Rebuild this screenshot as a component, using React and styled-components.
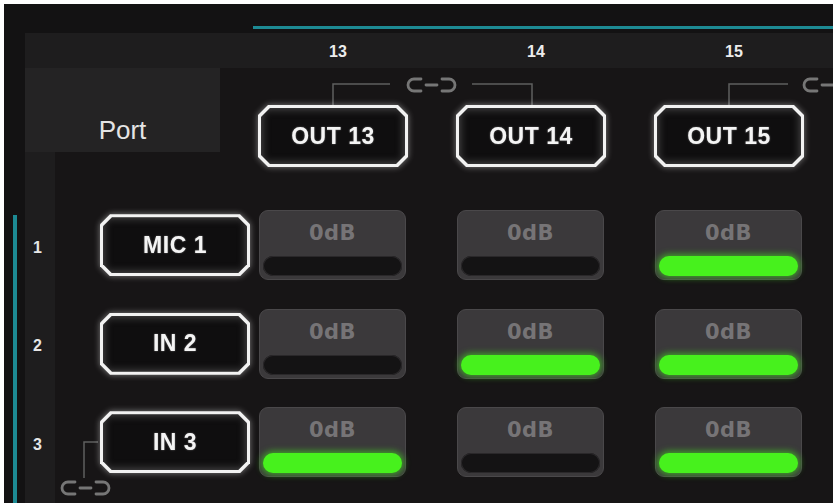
import styled, { createGlobalStyle } from "styled-components";

const FONT = `"Liberation Sans", Arial, sans-serif`;
const TEAL = "#1d8a94";
const COLUMNS = "30px 198px repeat(3, 198px)";

const GlobalStyle = createGlobalStyle`
  *, *::before, *::after {
    box-sizing: border-box;
  }
  html, body {
    margin: 0;
    background: #ffffff;
  }
  body {
    height: 100vh;
    padding: 4px 4px 0;
    overflow: hidden;
    font-family: ${FONT};
  }
  #root {
    height: 100%;
  }
`;

const Frame = styled.div`
  display: flex;
  height: 100%;
  background: #131213;
  overflow: hidden;
`;

const LeftRail = styled.div`
  flex-shrink: 0;
  width: 21px;
  padding: 211px 0 0 9px;
`;

const RailMark = styled.div`
  width: 4px;
  height: 100%;
  background: ${TEAL};
`;

const Main = styled.div`
  flex: 1;
  min-width: 0;
  display: flex;
  flex-direction: column;
`;

const TopStrip = styled.div`
  height: 3px;
  margin: 22px 0 4px 228px;
  background: ${TEAL};
`;

const HeaderBar = styled.div`
  display: grid;
  grid-template-columns: ${COLUMNS};
  align-items: center;
  height: 35px;
  background: #1e1d1e;
`;

const ColNumber = styled.div`
  grid-column: ${(p) => p.$col};
  width: 150px;
  margin-left: 5px;
  padding: 2px 0 0 10px;
  text-align: center;
  color: #ececec;
  font-size: 16px;
  font-weight: 700;
`;

const Matrix = styled.div`
  flex: 1;
  display: grid;
  grid-template-columns: ${COLUMNS};
  grid-template-rows: 128px repeat(3, 98.5px) 1fr;
  background: #171516;
`;

const NumberRail = styled.div`
  grid-column: 1;
  grid-row: 1 / -1;
  background: #1e1d1e;
`;

const PortCell = styled.div`
  grid-column: 1 / 3;
  grid-row: 1;
  align-self: start;
  width: 195px;
  height: 84px;
  padding-top: 48px;
  background: #242324;
  color: #e4e4e4;
  font-size: 26px;
  line-height: 28px;
  text-align: center;
`;

const LinkLayer = styled.svg`
  grid-column: 3 / -1;
  grid-row: 1;
  align-self: start;
  overflow: visible;
`;

const InLink = styled.svg`
  grid-column: 2;
  grid-row: 4;
  align-self: start;
  overflow: visible;
`;

const OutSlot = styled.div`
  grid-column: ${(p) => p.$col};
  grid-row: 1;
  padding: 37px 0 0 5px;
`;

const RowNumber = styled.div`
  grid-column: 1;
  grid-row: ${(p) => p.$row};
  display: flex;
  align-items: center;
  justify-content: center;
  padding: 5px 5px 0 0;
  color: #e6e6e6;
  font-size: 16px;
  font-weight: 700;
`;

const RowLabel = styled.div`
  grid-column: 2;
  grid-row: ${(p) => p.$row};
  display: flex;
  align-items: center;
  padding-left: 45px;
`;

const CellSlot = styled.div`
  grid-column: ${(p) => p.$col};
  grid-row: ${(p) => p.$row};
  display: flex;
  align-items: center;
  padding-left: 6px;
`;

/* octagonal port button: white rim layer + dark face layer */
const Octagon = styled.div`
  width: 150px;
  height: 62px;
  filter: drop-shadow(0 0 3px rgba(255, 255, 255, 0.45));
`;

const OctRim = styled.div`
  height: 100%;
  padding: 3px;
  background: #f2f2f2;
  clip-path: polygon(10px 0, calc(100% - 10px) 0, 100% 10px, 100% calc(100% - 10px), calc(100% - 10px) 100%, 10px 100%, 0 calc(100% - 10px), 0 10px);
`;

const OctFace = styled.div`
  height: 100%;
  display: flex;
  align-items: center;
  justify-content: center;
  background: #0f0e0f;
  box-shadow: inset 0 0 9px 1px rgba(200, 200, 200, 0.35);
  clip-path: polygon(9px 0, calc(100% - 9px) 0, 100% 9px, 100% calc(100% - 9px), calc(100% - 9px) 100%, 9px 100%, 0 calc(100% - 9px), 0 9px);
  color: #f4f4f4;
  font-size: 23px;
  font-weight: 700;
  letter-spacing: 0.5px;
  text-shadow: 0 0 2px rgba(255, 255, 255, 0.4);
`;

const Cell = styled.div`
  width: 147px;
  height: 70px;
  display: flex;
  flex-direction: column;
  align-items: center;
  padding: 10px 3px 3px;
  border: 1px solid #4a484a;
  border-radius: 9px;
  background: #3b393b;
`;

const Gain = styled.span`
  color: #767476;
  font-family: "DejaVu Sans", ${FONT};
  font-size: 21px;
  font-weight: 700;
  line-height: 24px;
  letter-spacing: 0.5px;
`;

const Meter = styled.div`
  align-self: stretch;
  margin-top: auto;
  height: 20px;
  border-radius: 10px;
  background: ${(p) => (p.$on ? "#47f11d" : "#141314")};
  box-shadow: ${(p) =>
    p.$on ? "0 0 6px 2px rgba(70, 240, 30, 0.55)" : "inset 0 0 0 1px #2a282a"};
`;

const PortButton = ({ children }) => (
  <Octagon>
    <OctRim>
      <OctFace>{children}</OctFace>
    </OctRim>
  </Octagon>
);

// "linked" symbol: two brackets joined by a dash
const Chain = ({ x, y }) => (
  <g
    transform={`translate(${x} ${y})`}
    fill="none"
    stroke="#767676"
    strokeWidth="2.8"
    strokeLinecap="round"
  >
    <path d="M15 3 H8 A6 6 0 0 0 8 15 H15" />
    <path d="M20 9 H31" />
    <path d="M36 3 H43 A6 6 0 0 1 43 15 H36" />
  </g>
);

const outputs = [13, 14, 15];

const inputs = [
  { n: 1, label: "MIC 1", on: [false, false, true] },
  { n: 2, label: "IN 2", on: [false, true, true] },
  { n: 3, label: "IN 3", on: [true, false, true] },
];

export default function App() {
  return (
    <>
      <GlobalStyle />
      <Frame>
        <LeftRail>
          <RailMark />
        </LeftRail>
        <Main>
          <TopStrip />
          <HeaderBar>
            {outputs.map((o, i) => (
              <ColNumber key={o} $col={i + 3}>
                {o}
              </ColNumber>
            ))}
          </HeaderBar>
          <Matrix>
            <NumberRail />
            <PortCell>Port</PortCell>

            <LinkLayer width="580" height="40">
              <g fill="none" stroke="#5f5f5f" strokeWidth="1.5">
                <path d="M80 39 V16 H137" />
                <path d="M219 16 H279 V39" />
                <path d="M476 39 V16 H535" />
              </g>
              <Chain x={153} y={8} />
              <Chain x={549} y={8} />
            </LinkLayer>

            {outputs.map((o, i) => (
              <OutSlot key={o} $col={i + 3}>
                <PortButton>OUT {o}</PortButton>
              </OutSlot>
            ))}

            {inputs.map((row, r) => [
              <RowNumber key={`n${row.n}`} $row={r + 2}>
                {row.n}
              </RowNumber>,
              <RowLabel key={`l${row.n}`} $row={r + 2}>
                <PortButton>{row.label}</PortButton>
              </RowLabel>,
              ...row.on.map((on, c) => (
                <CellSlot key={`c${row.n}-${c}`} $row={r + 2} $col={c + 3}>
                  <Cell>
                    <Gain>0dB</Gain>
                    <Meter $on={on} />
                  </Cell>
                </CellSlot>
              )),
            ])}

            <InLink width="60" height="106">
              <path d="M43 49 H29 V85" fill="none" stroke="#5f5f5f" strokeWidth="1.5" />
              <Chain x={5} y={86} />
            </InLink>
          </Matrix>
        </Main>
      </Frame>
    </>
  );
}
